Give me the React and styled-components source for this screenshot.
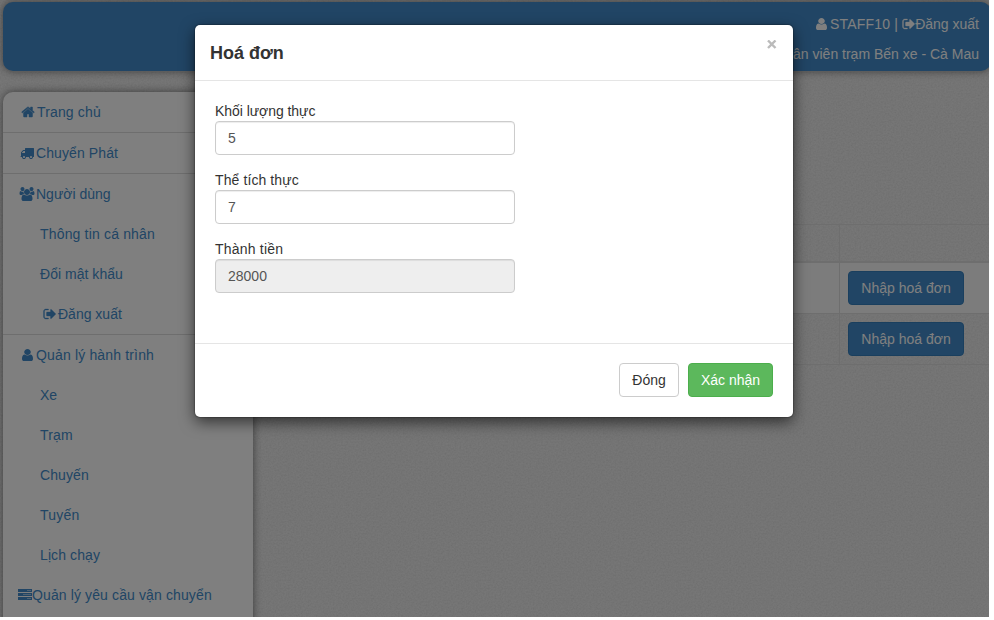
import React from "react";
import styled, { createGlobalStyle } from "styled-components";

const grain =
  "url(\"data:image/svg+xml,%3Csvg xmlns='http://www.w3.org/2000/svg' width='200' height='200'%3E%3Cfilter id='n'%3E%3CfeTurbulence type='fractalNoise' baseFrequency='.6' numOctaves='2' stitchTiles='stitch'/%3E%3CfeColorMatrix type='saturate' values='0'/%3E%3CfeComponentTransfer%3E%3CfeFuncA type='linear' slope='0' intercept='.19'/%3E%3C/feComponentTransfer%3E%3C/filter%3E%3Crect width='200' height='200' filter='url(%23n)'/%3E%3C/svg%3E\")";

const GlobalStyle = createGlobalStyle`
  * { box-sizing: border-box; }
  body {
    margin: 0;
    background: #fff;
    color: #333;
    font: 14px/20px "Liberation Sans", Arial, sans-serif;
    overflow: hidden;
  }
  input, button { font: inherit; }
`;

const Page = styled.div`
  position: relative;
  width: 989px;
  height: 617px;
  overflow: hidden;
  padding: 2px 0 0 3px;
  background: #f3f3f3 ${grain};
`;

const Header = styled.header`
  display: flex;
  flex-direction: column;
  align-items: flex-end;
  width: 988px;
  height: 69px;
  padding: 12px 12px 0 0;
  gap: 10px;
  border-radius: 10px;
  background: #428bca;
  color: #fff;
  box-shadow: 0 1px 1px #bbb, 0 0 8px rgba(0, 0, 0, 0.5);
`;

const HeaderLine = styled.div`
  display: flex;
  align-items: center;
  white-space: pre;
  height: 20px;
`;

const UserName = styled.span`
  margin-left: 1px;
  letter-spacing: 0.2px;
`;

const Columns = styled.div`
  display: flex;
  align-items: flex-start;
  margin-top: 21px;
`;

const Sidebar = styled.nav`
  width: 250px;
  height: 560px;
  flex: none;
  border-radius: 10px;
  background: #fff;
  box-shadow: 0 0 8px rgba(0, 0, 0, 0.5);
`;

const Group = styled.section`
  border-bottom: ${(p) => (p.$line ? "1px solid #ddd" : "0")};
`;

const Item = styled.a`
  display: flex;
  align-items: center;
  height: 40px;
  padding-left: ${(p) => p.$indent || 15}px;
  color: #428bca;
  letter-spacing: ${(p) => p.$tracking || 0}px;
  white-space: pre;
`;

const IconSlot = styled.span`
  display: flex;
  justify-content: center;
  align-items: center;
  width: ${(p) => p.$w || 18}px;
  height: 14px;
  flex: none;
`;

const Glyph = styled.svg`
  display: block;
  flex: none;
  fill: currentColor;
`;

const Table = styled.div`
  flex: 1;
  margin: 132px 0 0 10px;
  border-top: 1px solid #ddd;
`;

const Row = styled.div`
  display: grid;
  grid-template-columns: 577px 1fr;
  height: ${(p) => p.$h}px;
  background: ${(p) => (p.$light ? "#f9f9f9" : "transparent")};
  border-bottom: ${(p) => p.$line || 1}px solid #ddd;
`;

const Cell = styled.div`
  padding: 8px;
  border-right: ${(p) => (p.$last ? "0" : "1px solid #ddd")};
`;

const tones = {
  primary: ["#428bca", "#357ebd", "#fff"],
  success: ["#5cb85c", "#4cae4c", "#fff"],
  plain: ["#fff", "#ccc", "#333"],
};

const Button = styled.button`
  width: ${(p) => p.$w}px;
  height: 34px;
  padding: 0;
  border: 1px solid ${(p) => tones[p.$tone][1]};
  border-radius: 4px;
  background: ${(p) => tones[p.$tone][0]};
  color: ${(p) => tones[p.$tone][2]};
  white-space: nowrap;
`;

const Overlay = styled.div`
  position: absolute;
  inset: 0;
  display: flex;
  align-items: flex-start;
  padding: 25px 0 0 195px;
  background: rgba(0, 0, 0, 0.5);
`;

const Modal = styled.div`
  width: 598px;
  height: 392px;
  border-radius: 5px;
  background: #fff;
  box-shadow: 0 5px 15px rgba(0, 0, 0, 0.6), 0 0 1px 1px rgba(0, 0, 0, 0.2);
`;

const ModalHeader = styled.div`
  display: flex;
  justify-content: space-between;
  height: 56px;
  padding: 15px 16px 0 15px;
  border-bottom: 1px solid #e5e5e5;
`;

const Title = styled.h4`
  margin: 0;
  font-size: 18px;
  line-height: 26px;
  font-weight: 700;
`;

const Close = styled.span`
  height: 9px;
  color: #bbb;
`;

const Fields = styled.div`
  display: flex;
  flex-direction: column;
  gap: 15px;
  height: 262px;
  padding: 20px 20px 0;
`;

const Field = styled.label`
  display: block;
  width: 300px;
  height: 54px;
  letter-spacing: ${(p) => p.$tracking || 0}px;
`;

const Input = styled.input`
  display: block;
  width: 300px;
  height: 34px;
  padding: 6px 12px;
  border: 1px solid #ccc;
  border-radius: 4px;
  background: ${(p) => (p.readOnly ? "#eee" : "#fff")};
  color: #555;
  box-shadow: inset 0 1px 1px rgba(0, 0, 0, 0.075);
`;

const Footer = styled.div`
  display: flex;
  justify-content: flex-end;
  gap: 9px;
  padding: 19px 20px;
  border-top: 1px solid #e5e5e5;
`;

const icons = {
  home: {
    w: 14,
    box: "0 0 1792 1792",
    stroke: 60,
    d: "M1472 992v480q0 26-19 45t-45 19h-384v-384h-256v384h-384q-26 0-45-19t-19-45v-480q0-1 .5-3t.5-3l575-474 575 474q1 2 1 6zm223-69l-62 74q-8 9-21 11h-3q-13 0-21-7l-692-577-692 577q-12 8-24 7-13-2-21-11l-62-74q-8-10-7-23.5t11-21.5l719-599q32-26 76-26t76 26l244 204v-195q0-14 9-23t23-9h192q14 0 23 9t9 23v408l219 182q10 8 11 21.5t-7 23.5z",
  },
  truck: {
    w: 14,
    box: "0 0 1792 1792",
    d: "M640 1408q0-52-38-90t-90-38-90 38-38 90 38 90 90 38 90-38 38-90zm-384-512h384v-256h-158q-13 0-22 9l-195 195q-9 9-9 22v30zm1280 512q0-52-38-90t-90-38-90 38-38 90 38 90 90 38 90-38 38-90zm256-1088v1024q0 15-4 26.5t-13.5 18.5-16.5 11.5-23.5 6-22.5 2-25.5 0-22.5-.5q0 106-75 181t-181 75-181-75-75-181h-384q0 106-75 181t-181 75-181-75-75-181h-64q-3 0-22.5.5t-25.5 0-22.5-2-23.5-6-16.5-11.5-13.5-18.5-4-26.5q0-26 19-45t45-19v-320q0-8-.5-35t0-38 2.5-34.5 6.5-37 14-30.5 22.5-30l198-198q19-19 50.5-32t58.5-13h160v-192q0-26 19-45t45-19h1024q26 0 45 19t19 45z",
  },
  users: {
    w: 16,
    box: "0 0 2048 1792",
    d: "M657 896q-162 5-265 128h-134q-82 0-138-40.5t-56-118.5q0-353 124-353 6 0 43.5 21t97.5 42.5 119 21.5q67 0 133-23-5 37-5 66 0 139 81 256zm1071 637q0 120-73 189.5t-194 69.5h-874q-121 0-194-69.5t-73-189.5q0-53 3.5-103.5t14-109 26.5-108.5 43-97.5 62-81 85.5-53.5 111.5-20q10 0 43 21.5t73 48 107 48 135 21.5 135-21.5 107-48 73-48 43-21.5q61 0 111.5 20t85.5 53.5 62 81 43 97.5 26.5 108.5 14 109 3.5 103.5zm-1024-1277q0 106-75 181t-181 75-181-75-75-181 75-181 181-75 181 75 75 181zm704 384q0 159-112.5 271.5t-271.5 112.5-271.5-112.5-112.5-271.5 112.5-271.5 271.5-112.5 271.5 112.5 112.5 271.5zm576 225q0 78-56 118.5t-138 40.5h-134q-103-123-265-128 81-117 81-256 0-29-5-66 66 23 133 23 59 0 119-21.5t97.5-42.5 43.5-21q124 0 124 353zm-128-609q0 106-75 181t-181 75-181-75-75-181 75-181 181-75 181 75 75 181z",
  },
  user: {
    w: 11,
    box: "256 0 1280 1792",
    d: "M1536 1399q0 109-62.5 187t-150.5 78h-854q-88 0-150.5-78t-62.5-187q0-85 8.5-160.5t31.5-152 58.5-131 94-89 134.5-34.5q131 128 313 128t313-128q76 0 134.5 34.5t94 89 58.5 131 31.5 152 8.5 160.5zm-256-887q0 159-112.5 271.5t-271.5 112.5-271.5-112.5-112.5-271.5 112.5-271.5 271.5-112.5 271.5 112.5 112.5 271.5z",
  },
  signOut: {
    w: 13,
    box: "0 0 1664 1792",
    stroke: 40,
    d: "M704 1440q0 4 1 20t.5 26.5-3 23.5-10 19.5-20.5 6.5h-320q-119 0-203.5-84.5t-84.5-203.5v-704q0-119 84.5-203.5t203.5-84.5h320q13 0 22.5 9.5t9.5 22.5q0 4 1 20t.5 26.5-3 23.5-10 19.5-20.5 6.5h-320q-66 0-113 47t-47 113v704q0 66 47 113t113 47h312l11.5 1 11.5 3 8 5.5 7 9 2 13.5zm928-544q0 26-19 45l-544 544q-19 19-45 19t-45-19-19-45v-288h-448q-26 0-45-19t-19-45v-384q0-26 19-45t45-19h448v-288q0-26 19-45t45-19 45 19l544 544q19 19 19 45z",
  },
  tasks: {
    w: 14,
    box: "0 0 14 14",
    d: "M0 1h14v3H0zM9 2.2v.6h4v-.6zM0 5h14v3H0zM5 6.2v.6h8v-.6zM0 9h14v3H0zM9 10.2v.6h4v-.6z",
  },
};

function Icon({ name, w }) {
  const icon = icons[name];
  return (
    <IconSlot $w={w}>
      <Glyph
        width={icon.w}
        height="14"
        viewBox={icon.box}
        preserveAspectRatio="none"
        stroke={icon.stroke ? "currentColor" : "none"}
        strokeWidth={icon.stroke}
      >
        <path fillRule={name === "tasks" ? "evenodd" : "nonzero"} d={icon.d} />
      </Glyph>
    </IconSlot>
  );
}

const groups = [
  { icon: "home", label: "Trang chủ", line: true, slot: 19, tracking: 0.15 },
  { icon: "truck", label: "Chuyển Phát", line: true, tracking: 0.1 },
  {
    icon: "users",
    label: "Người dùng",
    line: true,
    children: [
      { label: "Thông tin cá nhân", tracking: 0.17 },
      { label: "Đổi mật khẩu", tracking: 0.03 },
      { label: "Đăng xuất", icon: "signOut" },
    ],
  },
  {
    icon: "user",
    label: "Quản lý hành trình",
    tracking: 0.16,
    children: [
      { label: "Xe" },
      { label: "Trạm", tracking: 0.2 },
      { label: "Chuyến", tracking: 0.1 },
      { label: "Tuyến", tracking: 0.2 },
      { label: "Lịch chạy", tracking: 0.1 },
    ],
  },
  { icon: "tasks", label: "Quản lý yêu cầu vận chuyển", slot: 14, tracking: 0.12 },
];

const fields = [
  { label: "Khối lượng thực", value: "5", tracking: -0.05 },
  { label: "Thể tích thực", value: "7", tracking: 0.1 },
  { label: "Thành tiền", value: "28000", readOnly: true, tracking: 0.2 },
];

export default function App() {
  return (
    <Page>
      <GlobalStyle />
      <Header>
        <HeaderLine>
          <Icon name="user" w={14} />
          <UserName>{"STAFF10 | "}</UserName>
          <Icon name="signOut" w={13} />
          Đăng xuất
        </HeaderLine>
        <HeaderLine>Nhân viên trạm Bến xe - Cà Mau</HeaderLine>
      </Header>
      <Columns>
        <Sidebar>
          {groups.map((g) => (
            <Group key={g.label} $line={g.line}>
              <Item $tracking={g.tracking}>
                <Icon name={g.icon} w={g.slot} />
                {g.label}
              </Item>
              {(g.children || []).map((c) => (
                <Item key={c.label} $indent={37} $tracking={c.tracking}>
                  {c.icon && <Icon name={c.icon} />}
                  {c.label}
                </Item>
              ))}
            </Group>
          ))}
        </Sidebar>
        <Table>
          <Row $h={38} $line={2}>
            <Cell />
            <Cell $last />
          </Row>
          {[true, false].map((light) => (
            <Row key={String(light)} $h={51} $light={light}>
              <Cell />
              <Cell $last>
                <Button $tone="primary" $w={116}>Nhập hoá đơn</Button>
              </Cell>
            </Row>
          ))}
        </Table>
      </Columns>
      <Overlay>
        <Modal role="dialog">
          <ModalHeader>
            <Title>Hoá đơn</Title>
            <Close>
              <Glyph width="11" height="9" viewBox="0 0 11 9">
                <path d="M2 .5 9.5 8M9.5.5 2 8" stroke="currentColor" strokeWidth="2.4" />
              </Glyph>
            </Close>
          </ModalHeader>
          <Fields>
            {fields.map((f) => (
              <Field key={f.label} $tracking={f.tracking}>
                {f.label}
                <Input defaultValue={f.value} readOnly={f.readOnly} />
              </Field>
            ))}
          </Fields>
          <Footer>
            <Button $tone="plain" $w={60}>Đóng</Button>
            <Button $tone="success" $w={85}>Xác nhận</Button>
          </Footer>
        </Modal>
      </Overlay>
    </Page>
  );
}
